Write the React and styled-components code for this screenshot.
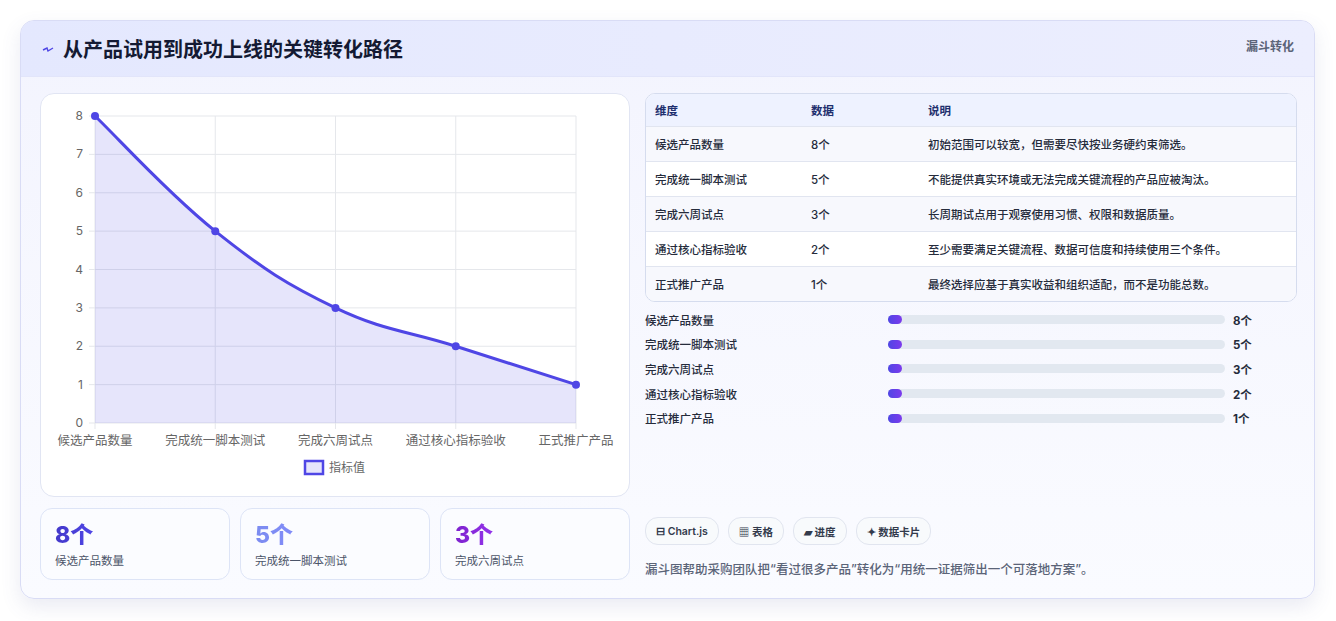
import styled, { createGlobalStyle } from "styled-components";

const Global = createGlobalStyle`
  body { margin: 0; background: #ffffff; font-family: "Inter", "Noto Sans CJK SC", sans-serif; }
`;

const Page = styled.div`
  padding: 20px 21px 21px 20px;
  background: #fff;
`;
const Panel = styled.div`
  border: 1px solid #d9dcf5;
  border-radius: 14px;
  overflow: hidden;
  background: linear-gradient(180deg, #f3f4fe 0%, #fafbff 100%);
  box-shadow: 0 8px 20px rgba(80, 90, 160, 0.12);
`;
const Header = styled.div`
  height: 55px;
  display: flex;
  align-items: center;
  justify-content: space-between;
  padding: 0 20px 0 21px;
  background: linear-gradient(90deg, #e4e8fe 0%, #eceefe 100%);
  border-bottom: 1px solid #e2e5fa;
`;
const Title = styled.h1`
  margin: 0;
  font-size: 20px;
  font-weight: 700;
  color: #141a33;
  display: flex;
  align-items: center;
  gap: 9px;
`;
const Tag = styled.span`
  font-size: 12px;
  font-weight: 600;
  color: #5b6478;
  align-self: flex-start;
  margin-top: 16px;
`;
const Body = styled.div`
  display: grid;
  grid-template-columns: 590px 652px;
  gap: 15px;
  padding: 16px 18px 18px 19px;
`;
const Col = styled.div`
  display: flex;
  flex-direction: column;
  gap: 11px;
`;
const ChartCard = styled.div`
  height: 402px;
  background: #fff;
  border: 1px solid #e1e5f3;
  border-radius: 14px;
`;
const Stats = styled.div`
  display: grid;
  grid-template-columns: repeat(3, 1fr);
  gap: 10px;
`;
const Stat = styled.div`
  height: 72px;
  border: 1px solid #dde4f6;
  border-radius: 12px;
  background: #fbfcff;
  padding: 12px 14px;
  box-sizing: border-box;
`;
const StatNum = styled.div`
  font-size: 23px;
  font-weight: 800;
  line-height: 28px;
  background: ${(p) => p.$grad};
  -webkit-background-clip: text;
  background-clip: text;
  color: transparent;
  display: inline-block;
`;
const StatLabel = styled.div`
  font-size: 11.5px;
  color: #4b5468;
  margin-top: 3px;
`;
const Table = styled.div`
  border: 1px solid #d5dcee;
  border-radius: 10px;
  overflow: hidden;
  background: #fff;
`;
const Row = styled.div`
  display: grid;
  grid-template-columns: 156px 117px 1fr;
  height: ${(p) => (p.$head ? 32 : 34)}px;
  align-items: center;
  padding-left: 9px;
  font-size: 11.5px;
  font-weight: ${(p) => (p.$head ? 600 : 500)};
  color: ${(p) => (p.$head ? "#1e2f6e" : "#252b3b")};
  background: ${(p) => (p.$head ? "#eef2ff" : p.$alt ? "#f7f8fd" : "#fff")};
  border-top: ${(p) => (p.$first ? "none" : "1px solid #e1e5f0")};
`;
const Bars = styled.div`
  display: flex;
  flex-direction: column;
  gap: 7.7px;
  margin-top: -2px;
`;
const BarRow = styled.div`
  display: grid;
  grid-template-columns: 243px 337px 1fr;
  align-items: center;
  height: 17px;
  font-size: 11.5px;
  font-weight: 500;
  color: #252b3b;
`;
const Track = styled.div`
  height: 9px;
  border-radius: 5px;
  background: #e2e8f0;
`;
const Fill = styled.div`
  height: 100%;
  border-radius: 5px;
  background: linear-gradient(90deg, #4f46e5, #7c3aed);
`;
const BarVal = styled.span`
  font-weight: 700;
  padding-left: 8px;
`;
const Spacer = styled.div`
  flex: 1;
`;
const Chips = styled.div`
  display: flex;
  gap: 9px;
`;
const Chip = styled.span`
  height: 26px;
  padding: 0 10px;
  border: 1px solid #e1e5ef;
  border-radius: 13px;
  background: #f8fafc;
  display: flex;
  align-items: center;
  gap: 4px;
  font-size: 10.5px;
  font-weight: 600;
  color: #333a4c;
`;
const Note = styled.p`
  margin: 3px 0 2px;
  font-size: 12.5px;
  font-weight: 500;
  color: #5b6478;
`;

const labels = ["候选产品数量", "完成统一脚本测试", "完成六周试点", "通过核心指标验收", "正式推广产品"];
const values = [8, 5, 3, 2, 1];
const notes = [
  "初始范围可以较宽，但需要尽快按业务硬约束筛选。",
  "不能提供真实环境或无法完成关键流程的产品应被淘汰。",
  "长周期试点用于观察使用习惯、权限和数据质量。",
  "至少需要满足关键流程、数据可信度和持续使用三个条件。",
  "最终选择应基于真实收益和组织适配，而不是功能总数。",
];

const X0 = 54, X1 = 535, Y0 = 22, Y1 = 329;
const px = (i) => X0 + (i * (X1 - X0)) / 4;
const py = (v) => Y1 - (v * (Y1 - Y0)) / 8;

function curve(pts) {
  let d = `M${pts[0][0]},${pts[0][1]}`;
  for (let i = 0; i < pts.length - 1; i++) {
    const p0 = pts[i - 1] || pts[i];
    const p1 = pts[i];
    const p2 = pts[i + 1];
    const p3 = pts[i + 2] || p2;
    const t = 0.2;
    const c1 = [p1[0] + (p2[0] - p0[0]) * t, p1[1] + (p2[1] - p0[1]) * t];
    const c2 = [p2[0] - (p3[0] - p1[0]) * t, p2[1] - (p3[1] - p1[1]) * t];
    d += ` C${c1[0]},${c1[1]} ${c2[0]},${c2[1]} ${p2[0]},${p2[1]}`;
  }
  return d;
}

function Chart() {
  const pts = values.map((v, i) => [px(i), py(v)]);
  const line = curve(pts);
  const font = { fontFamily: "Inter, 'Noto Sans CJK SC', sans-serif" };
  return (
    <svg width="590" height="402" style={font}>
      {[0, 1, 2, 3, 4, 5, 6, 7, 8].map((v) => (
        <g key={v}>
          <line x1={X0 - 6} x2={X1} y1={py(v)} y2={py(v)} stroke="#e5e7eb" />
          <text x={X0 - 12} y={py(v) + 4} fontSize="12" fill="#666" textAnchor="end">{v}</text>
        </g>
      ))}
      {labels.map((l, i) => (
        <g key={l}>
          <line x1={px(i)} x2={px(i)} y1={Y0} y2={Y1 + 6} stroke="#e5e7eb" />
          <text x={px(i)} y={351} fontSize="12.5" fill="#666" textAnchor="middle">{l}</text>
        </g>
      ))}
      <path d={`${line} L${X1},${Y1} L${X0},${Y1} Z`} fill="rgba(79,70,229,0.14)" />
      <path d={line} fill="none" stroke="#4f46e5" strokeWidth="3" />
      {pts.map((p, i) => (
        <circle key={i} cx={p[0]} cy={p[1]} r="4" fill="#4f46e5" />
      ))}
      <rect x="264" y="367" width="18" height="13" fill="rgba(79,70,229,0.14)" stroke="#4f46e5" strokeWidth="2.5" />
      <text x="288" y="378" fontSize="12" fill="#666">指标值</text>
    </svg>
  );
}

const stats = [
  { v: "8个", l: "候选产品数量", g: "linear-gradient(90deg,#4338ca,#4f46e5)" },
  { v: "5个", l: "完成统一脚本测试", g: "linear-gradient(90deg,#7c8cf0,#818cf8)" },
  { v: "3个", l: "完成六周试点", g: "linear-gradient(90deg,#7e22ce,#9333ea)" },
];

export default function App() {
  return (
    <Page>
      <Global />
      <Panel>
        <Header>
          <Title>
            <svg width="12" height="8" viewBox="0 0 12 8">
              <path d="M1 5 L5 3 L6 6 L11 3" stroke="#4f46e5" strokeWidth="1.4" fill="none" />
            </svg>
            从产品试用到成功上线的关键转化路径
          </Title>
          <Tag>漏斗转化</Tag>
        </Header>
        <Body>
          <Col>
            <ChartCard>
              <Chart />
            </ChartCard>
            <Stats>
              {stats.map((s) => (
                <Stat key={s.l}>
                  <StatNum $grad={s.g}>{s.v}</StatNum>
                  <StatLabel>{s.l}</StatLabel>
                </Stat>
              ))}
            </Stats>
          </Col>
          <Col>
            <Table>
              <Row $head $first>
                <span>维度</span><span>数据</span><span>说明</span>
              </Row>
              {labels.map((l, i) => (
                <Row key={l} $alt={i % 2 === 0}>
                  <span>{l}</span><span>{values[i]}个</span><span>{notes[i]}</span>
                </Row>
              ))}
            </Table>
            <Bars>
              {labels.map((l) => (
                <BarRow key={l}>
                  <span>{l}</span>
                  <Track><Fill style={{ width: "14px" }} /></Track>
                  <BarVal>{values[labels.indexOf(l)]}个</BarVal>
                </BarRow>
              ))}
            </Bars>
            <Spacer />
            <Chips>
              <Chip>⊟ Chart.js</Chip>
              <Chip>▦ 表格</Chip>
              <Chip>▰ 进度</Chip>
              <Chip>✦ 数据卡片</Chip>
            </Chips>
            <Note>漏斗图帮助采购团队把“看过很多产品”转化为“用统一证据筛出一个可落地方案”。</Note>
          </Col>
        </Body>
      </Panel>
    </Page>
  );
}
